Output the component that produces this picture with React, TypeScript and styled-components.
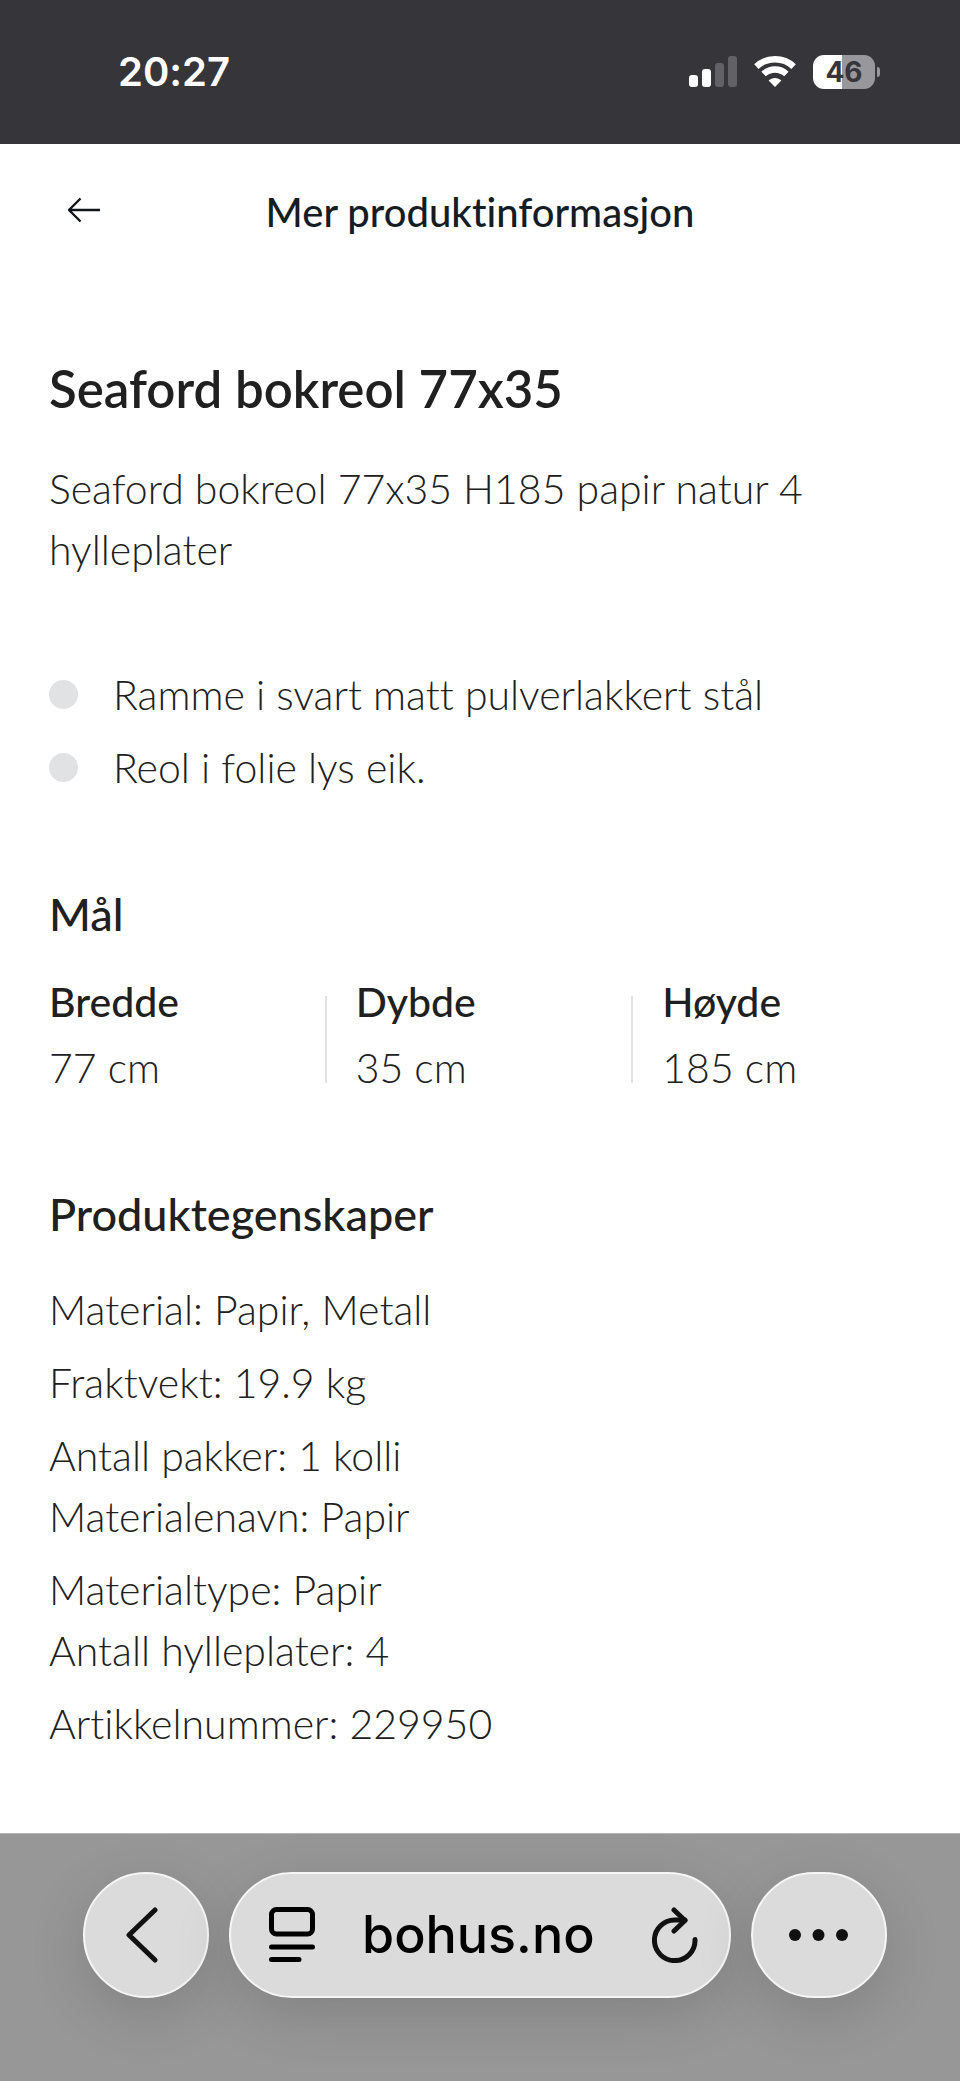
import React from "react";
import styled, { createGlobalStyle } from "styled-components";

const GlobalStyle = createGlobalStyle`
  *, *::before, *::after { box-sizing: border-box; }
  body {
    margin: 0;
    background: #ffffff;
    color: #202020;
    font-family: Lato, "Liberation Sans", sans-serif;
    font-variant-ligatures: none;
  }
  h1, h2, p, ul, dl, dd, dt { margin: 0; padding: 0; }
  button { border: 0; padding: 0; background: none; color: inherit; font: inherit; cursor: pointer; }
  svg { display: block; }
`;

const Page = styled.div`
  min-height: 100vh;
  display: flex;
  flex-direction: column;
`;

const StatusBar = styled.div`
  display: flex;
  justify-content: space-between;
  align-items: center;
  height: 144px;
  padding: 0 80px 0 118px;
  background: #363539;
  color: #ffffff;
  font-family: Inter, sans-serif;
`;

const Clock = styled.time`
  font-size: 40px;
  line-height: 48px;
  font-weight: 600;
`;

const StatusIcons = styled.div`
  display: flex;
  align-items: center;
  gap: 17px;
`;

const Battery = styled.div`
  display: flex;
  align-items: center;
  gap: 2px;
`;

const BatteryBody = styled.div`
  width: 62px;
  border-radius: 11px;
  background: linear-gradient(to right, #ffffff 47%, #98979b 47%);
  color: #363539;
  font-size: 28px;
  line-height: 34px;
  font-weight: 700;
  text-align: center;
`;

const BatteryTip = styled.div`
  width: 3px;
  height: 10px;
  border-radius: 0 5px 5px 0;
  background: #98979b;
`;

const Header = styled.header`
  display: grid;
  grid-template-columns: 70px 1fr 70px;
  align-items: start;
  height: 136px;
  padding: 31px 49px 0;
`;

const BackLink = styled.button`
  display: flex;
  align-items: center;
  justify-content: center;
  width: 70px;
  height: 70px;
  color: #111418;
`;

const HeaderTitle = styled.p`
  color: #141c24;
  font-size: 40px;
  line-height: 74px;
  font-weight: 500;
  text-align: center;
`;

const Main = styled.main`
  flex: 1;
  padding: 73px 49px 76px;
`;

const ProductName = styled.h1`
  margin-bottom: 33px;
  font-size: 51px;
  line-height: 72px;
  font-weight: 600;
`;

const Text = styled.p`
  font-size: 41px;
  line-height: 61px;
  font-weight: 300;
`;

const BulletList = styled.ul`
  display: flex;
  flex-direction: column;
  gap: 12px;
  margin-top: 84px;
  list-style: none;
`;

const Bullet = styled.li`
  display: flex;
  align-items: center;
  gap: 35px;
  font-size: 41px;
  line-height: 61px;
  font-weight: 300;

  &::before {
    content: "";
    flex: none;
    width: 29px;
    height: 29px;
    border-radius: 50%;
    background: #e1e2e4;
  }
`;

const SectionTitle = styled.h2`
  margin-top: 86px;
  font-size: 45px;
  line-height: 60px;
  font-weight: 500;
`;

const Measures = styled.dl`
  display: grid;
  grid-template-columns: repeat(3, 1fr);
  column-gap: 30px;
  margin-top: 27px;
  margin-right: -28px;
`;

const Measure = styled.div`
  position: relative;
  display: flex;
  flex-direction: column;
  gap: 5px;
  font-size: 41px;
  line-height: 61px;

  & + &::before {
    content: "";
    position: absolute;
    top: 25px;
    bottom: 15px;
    left: -31px;
    width: 2px;
    background: #e1e2e4;
  }
`;

const MeasureName = styled.dt`
  font-weight: 500;
`;

const MeasureValue = styled.dd`
  font-weight: 300;
`;

const Properties = styled.div`
  display: flex;
  flex-direction: column;
  gap: 12px;
  margin-top: 35px;
`;

const BrowserBar = styled.footer`
  display: flex;
  gap: 20px;
  height: 248px;
  padding: 38px 73px 0 83px;
  border-top: 1px solid #b4b4b4;
  background: #979797;
  font-family: Inter, sans-serif;
`;

const glass = `
  display: flex;
  align-items: center;
  height: 126px;
  border: 2px solid #f6f6f6;
  border-radius: 63px;
  background: #dbdbdb;
  color: #111111;
  box-shadow: 0 16px 60px rgba(0, 0, 0, 0.14);
`;

const RoundButton = styled.button<{ $width: number }>`
  && { ${glass} }
  flex: none;
  justify-content: center;
  width: ${(p) => p.$width}px;
`;

const AddressBar = styled.div`
  ${glass}
  flex: 1;
  gap: 47px;
  padding: 0 31px 0 38px;

  & > :last-child {
    margin-left: auto;
  }
`;

const Address = styled.button`
  && {
    color: #000000;
    font-size: 52px;
    line-height: 64px;
    font-weight: 500;
  }
`;

const SignalIcon = () => (
  <svg width="48" height="32" viewBox="0 0 48 32" aria-hidden="true">
    <rect x="0" y="19" width="9" height="12" rx="3" fill="#fff" />
    <rect x="13" y="13" width="9" height="18" rx="3" fill="#fff" />
    <rect x="26" y="7" width="9" height="24" rx="3" fill="#626165" />
    <rect x="39" y="0" width="9" height="31" rx="3" fill="#626165" />
  </svg>
);

const WifiIcon = () => (
  <svg width="42" height="32" viewBox="0 0 42 32" aria-hidden="true">
    <g fill="none" stroke="#fff" strokeWidth="6.4">
      <path d="M2.4 10.6C12.6.8 29.4.8 39.6 10.6" />
      <path d="M9.6 18C16 12 26 12 32.4 18" />
    </g>
    <path d="M21 31 14.6 24.6C18 21.2 24 21.2 27.4 24.6Z" fill="#fff" />
  </svg>
);

const ArrowLeftIcon = () => (
  <svg width="34" height="26" viewBox="0 0 34 26" fill="none" stroke="currentColor" strokeWidth="2.4" aria-hidden="true">
    <path d="M33 13H2M13.5 1.5 2 13 13.5 24.5" strokeLinejoin="round" />
  </svg>
);

const ChevronIcon = () => (
  <svg width="40" height="56" viewBox="0 0 40 56" fill="none" stroke="currentColor" strokeWidth="5" strokeLinecap="round" strokeLinejoin="round" aria-hidden="true">
    <path d="M29 3 3 28 29 53" />
  </svg>
);

const PageIcon = () => (
  <svg width="46" height="56" viewBox="0 0 46 56" fill="none" stroke="#000" strokeWidth="5" strokeLinecap="round" aria-hidden="true">
    <rect x="2.5" y="2.5" width="41" height="24.5" rx="5" />
    <path d="M2.5 40H43.5M2.5 52.5H30" />
  </svg>
);

const ReloadIcon = () => (
  <svg width="46" height="56" viewBox="0 0 46 56" fill="none" stroke="currentColor" strokeWidth="5" strokeLinecap="round" strokeLinejoin="round" aria-hidden="true">
    <path d="M43 32.5A20.3 20.3 0 1 1 22.7 13H33" />
    <path d="M22 3 33 13.5 22 24" />
  </svg>
);

const DotsIcon = () => (
  <svg width="60" height="12" viewBox="0 0 60 12" fill="currentColor" aria-hidden="true">
    <circle cx="6" cy="6" r="6" />
    <circle cx="29.5" cy="6" r="6" />
    <circle cx="53" cy="6" r="6" />
  </svg>
);

const measures = [
  { name: "Bredde", value: "77 cm" },
  { name: "Dybde", value: "35 cm" },
  { name: "Høyde", value: "185 cm" },
];

const properties = [
  ["Material: Papir, Metall"],
  ["Fraktvekt: 19.9 kg"],
  ["Antall pakker: 1 kolli", "Materialenavn: Papir"],
  ["Materialtype: Papir", "Antall hylleplater: 4"],
  ["Artikkelnummer: 229950"],
];

export default function App() {
  return (
    <Page>
      <GlobalStyle />
      <StatusBar>
        <Clock>20:27</Clock>
        <StatusIcons>
          <SignalIcon />
          <WifiIcon />
          <Battery>
            <BatteryBody>46</BatteryBody>
            <BatteryTip />
          </Battery>
        </StatusIcons>
      </StatusBar>
      <Header>
        <BackLink type="button" aria-label="Tilbake">
          <ArrowLeftIcon />
        </BackLink>
        <HeaderTitle>Mer produktinformasjon</HeaderTitle>
      </Header>
      <Main>
        <ProductName>Seaford bokreol 77x35</ProductName>
        <Text>Seaford bokreol 77x35 H185 papir natur 4 hylleplater</Text>
        <BulletList>
          <Bullet>Ramme i svart matt pulverlakkert stål</Bullet>
          <Bullet>Reol i folie lys eik.</Bullet>
        </BulletList>
        <SectionTitle>Mål</SectionTitle>
        <Measures>
          {measures.map((m) => (
            <Measure key={m.name}>
              <MeasureName>{m.name}</MeasureName>
              <MeasureValue>{m.value}</MeasureValue>
            </Measure>
          ))}
        </Measures>
        <SectionTitle>Produktegenskaper</SectionTitle>
        <Properties>
          {properties.map((group) => (
            <div key={group[0]}>
              {group.map((line) => (
                <Text key={line}>{line}</Text>
              ))}
            </div>
          ))}
        </Properties>
      </Main>
      <BrowserBar>
        <RoundButton $width={126} type="button" aria-label="Forrige side">
          <ChevronIcon />
        </RoundButton>
        <AddressBar>
          <button type="button" aria-label="Sidemeny">
            <PageIcon />
          </button>
          <Address type="button">bohus.no</Address>
          <button type="button" aria-label="Last inn på nytt">
            <ReloadIcon />
          </button>
        </AddressBar>
        <RoundButton $width={136} type="button" aria-label="Mer">
          <DotsIcon />
        </RoundButton>
      </BrowserBar>
    </Page>
  );
}
